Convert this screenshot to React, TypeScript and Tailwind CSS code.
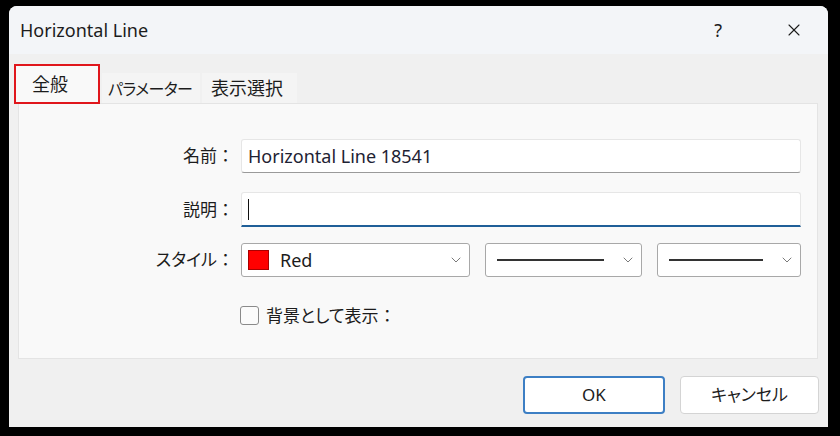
import { ChevronDown, X } from "lucide-react";

const ui = "font-['Noto_Sans','Noto_Sans_CJK_JP',sans-serif]";
const palt = "[font-feature-settings:'palt']";

function Select({ width, children }: { width: string; children: React.ReactNode }) {
  return (
    <div className={`flex h-[34px] ${width} items-center rounded-[3px] border border-[#a8a8a8] bg-white pl-[6px] pr-[5px]`}>
      <div className="flex flex-1 items-center">{children}</div>
      <ChevronDown className="h-[16px] w-[16px] text-[#707070]" strokeWidth={1.4} />
    </div>
  );
}

function LineSample({ width }: { width: string }) {
  return <span className={`ml-[5px] block h-[2px] ${width} bg-[#333]`} />;
}

export default function App() {
  return (
    <div className={`h-[436px] w-[840px] bg-black pl-[9px] pt-[6px] ${ui}`}>
      <div className="flex h-[421px] w-[819px] flex-col overflow-hidden rounded-t-[8px] bg-[#f0f0f0] text-[#1c1c1c]">
        {/* title bar */}
        <div className="flex h-[48px] items-center bg-[#f3f5f8] pl-[11px]">
          <span className="text-[18px]">Horizontal Line</span>
          <span className="ml-auto mr-[62px] text-[18px]">?</span>
          <X className="mr-[24px] h-[20px] w-[20px]" strokeWidth={1.3} />
        </div>

        {/* tabs */}
        <div className={`mt-[10px] flex items-end whitespace-nowrap pl-[5px] text-[18px] ${palt}`}>
          <div className="z-10 flex h-[40px] w-[86px] items-center border-2 border-[#e0161c] bg-[#f9f9f9] pl-[16px]">
            全般
          </div>
          <div className="ml-[2px] flex h-[31px] w-[98px] items-center bg-[#f4f4f4] pl-[6px] text-[16px] tracking-[-0.6px]">
            パラメーター
          </div>
          <div className="ml-[2px] flex h-[31px] w-[95px] items-center bg-[#f4f4f4] pl-[9px]">表示選択</div>
        </div>

        {/* panel */}
        <div className="-mt-px ml-[9px] h-[256px] w-[800px] border border-[#e4e4e4] bg-[#f9f9f9] pt-[35px] text-[17px]">
          <div className="grid grid-cols-[215px_1fr] items-center gap-x-[7px] pr-[19px]">
            <span className="text-right">名前：</span>
            <div className="flex h-[34px] items-center rounded-[3px] border border-[#e6e6e6] border-b-[#9a9a9a] bg-white pl-[6px] text-[18px] text-[#1e2233]">
              Horizontal Line 18541
            </div>

            <span className="mt-[19px] text-right">説明：</span>
            <div className="mt-[19px] flex h-[35px] items-center rounded-t-[3px] border border-[#e6e6e6] border-b-2 border-b-[#1f5f98] bg-white pl-[6px]">
              <span className="block h-[21px] w-px bg-[#111]" />
            </div>

            <span className="mt-[16px] text-right">
              <span className={palt}>スタイル</span>：
            </span>
            <div className="mt-[16px] flex gap-[15px]">
              <Select width="w-[229px]">
                <span className="block h-[20px] w-[21px] border border-[#a00] bg-[#ff0000]" />
                <span className="ml-[11px] text-[18px]">Red</span>
              </Select>
              <Select width="w-[157px]">
                <LineSample width="w-[107px]" />
              </Select>
              <Select width="w-[144px]">
                <LineSample width="w-[94px]" />
              </Select>
            </div>

            <span />
            <label className={`-ml-[1px] mt-[26px] flex items-center gap-[7px] ${palt}`}>
              <span className="block h-[19px] w-[19px] rounded-[3px] border border-[#8a8a8a] bg-[#fbfbfb]" />
              背景として表示 ：
            </label>
          </div>
        </div>

        {/* footer */}
        <div className={`mr-[9px] mt-[17px] flex justify-end gap-[15px] text-[17px] ${palt}`}>
          <button className="h-[38px] w-[142px] rounded-[4px] border-2 border-[#3d7fc4] bg-white">OK</button>
          <button className="h-[38px] w-[139px] rounded-[4px] border border-[#d4d4d4] bg-white">キャンセル</button>
        </div>
      </div>
    </div>
  );
}
